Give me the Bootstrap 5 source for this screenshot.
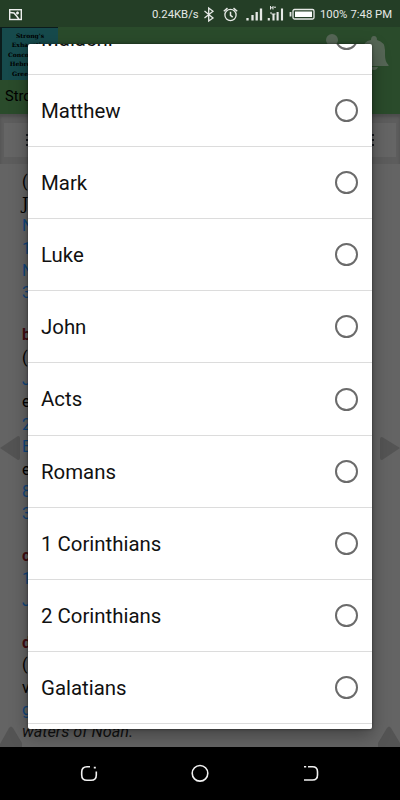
<!DOCTYPE html>
<html lang="en">
<head>
<meta charset="utf-8">
<meta name="viewport" content="width=device-width, initial-scale=1">
<title>Choose a book</title>
<link href="https://cdn.jsdelivr.net/npm/bootstrap@5.3.0/dist/css/bootstrap.min.css" rel="stylesheet">
<style>
body{font-family:Roboto,"Liberation Sans",sans-serif;background:#646464;width:400px;height:800px;overflow:hidden;color:#000}
.phone{width:400px;height:800px}
.status{height:27px;background:#243e26;color:#e6e9e6;font-size:11.3px;line-height:27px;padding-top:1px;white-space:nowrap}
.status svg,.status span{flex:none}
.appbar{height:87px;background:#2a4b2b}
.cover{width:58px;height:53px;background:#164a4c;border:solid #0b1c1c;border-width:1px 0 0 2px;font:bold 6px/9.4px "DejaVu Serif",serif;padding-top:3px;white-space:nowrap}
.apptitle{font-size:14.6px;line-height:32px;padding-left:5px}
.toolrow{height:50px;background:#5d5d5d;padding:9px 4px 7px;box-shadow:inset 0 3px 3px #4d4d4d}
.toolbox{background:#656565;padding:0 21px}
.page-text{height:583px;font-size:16px;line-height:22.36px;padding:6.5px 0 0 22px;overflow:hidden}
.verse{margin:0 0 19.7px}
.verse div{height:22.36px;white-space:nowrap}
.verse .closing{font-size:16.2px;color:#111}
.ref{color:#10467c}
.key{color:#400c10;font-weight:700}
.keys{height:53px;background:#000}
.sheet{left:28px;top:44px;width:344px;height:685px;background:#fff;border-radius:2px;overflow:hidden}
.sheet-shadow{left:28px;top:44px;width:344px;height:685px;border-radius:2px;box-shadow:0 0 3px rgba(0,0,0,.5),0 6px 18px rgba(0,0,0,.35)}
.choices{margin-top:-41.5px}
.choice{height:72.2px;border-bottom:1.5px solid #dcdcdc;padding:0 14px 0 13px;font-size:20.4px;color:#111}
.choice span{padding-top:1.5px}
.ring{width:23px;height:23px;border:2px solid #6b6b6b;border-radius:50%}
</style>
<script src="https://cdn.jsdelivr.net/npm/bootstrap@5.3.0/dist/js/bootstrap.bundle.min.js"></script>
</head>
<body>
<div class="phone position-relative d-flex flex-column overflow-hidden">
  <header class="status d-flex align-items-center">
    <svg width="152" height="27" fill="none" stroke="#eef0ee" stroke-width="1.4"><rect x="9.7" y="8.7" width="11.6" height="9.8"/><path d="M10 11.5l4 .5 3 3.5 2 3M16 12h3M17.5 10.5v3" stroke-width="1.5"/></svg>
    <span style="width:46px">0.24KB/s</span>
    <svg width="122" height="27" viewBox="198 0 122 27" fill="none" stroke="#e6e9e6" stroke-width="1.3">
      <path d="M204.5 10l8.500 7-4.300 3V7l4.300 3.300-8.500 6.700"/>
      <circle cx="230.5" cy="14" r="5.6"/><path d="M230.5 10.800v3.500l2.200 1.800M223.800 10.300l3.700-3.200M237.200 10.300l-3.700-3.200" stroke-width="1.5"/>
      <path d="M247.5 17v2.500M252.500 14v5.500M256.700 11v8.500M261 7.500v12" stroke-width="2.3"/>
      <path d="M268.800 17v2.500M273.500 13v6.500M277.600 11v8.500M282 7.500v12" stroke-width="2.1"/>
      <path d="M270.5 5v3.500M273 5v3.500M270.500 6.800h2.500M274 6.200h2M270 12h2M271.500 13h4" stroke-width="1"/>
      <rect x="293" y="8.500" width="21" height="9.500" rx="1.5"/><rect x="295" y="10.500" width="17" height="5.500" fill="#fff" stroke="none"/><path d="M290.5 11v4.500" stroke-width="1.8"/>
    </svg>
    <span style="width:30.5px">100%</span><span>7:48 PM</span>
  </header>
  <div class="appbar d-flex justify-content-between">
    <div><div class="cover text-center">Strong's<br>Exhaustive<br>Concordance<br>Hebrew and<br>Greek Lex.</div><div class="apptitle">Strong's</div></div>
    <svg width="90" height="50" viewBox="310 27 90 50" fill="#566656"><circle cx="332" cy="40" r="6"/><path d="M322 47q10-8 20 0zM359 66q4-4 4-11v-5q0-9 8-10 0-4 3-4t3 4q8 2 8 10v5q0 7 3.500 10v1zM370 67h8q-1 3-4 3t-4-3z"/></svg>
  </div>
  <div class="toolrow"><div class="toolbox h-100 d-flex justify-content-between align-items-center">
    <svg width="4" height="16" fill="#171a20"><path d="M1 2h2v2H1zM1 7h2v2H1zM1 12h2v2H1z"/></svg>
    <svg width="4" height="16" fill="#171a20"><path d="M1 2h2v2H1zM1 7h2v2H1zM1 12h2v2H1z"/></svg>
  </div></div>
  <main class="page-text">
    <div class="verse"><div>(</div><div style="font-family:'DejaVu Serif',serif">J</div><div class="ref">N</div><div class="ref">1</div><div class="ref">N</div><div class="ref">3</div></div>
    <div class="verse"><div class="key">b</div><div>(</div><div class="ref">J</div><div>e</div><div class="ref">2</div><div class="ref">E</div><div>e</div><div class="ref">8</div><div class="ref">3</div></div>
    <div class="verse"><div class="key">c</div><div class="ref">1</div><div class="ref">J</div></div>
    <div class="verse"><div class="key">d</div><div>(</div><div>v</div><div class="ref">g</div><div class="closing fst-italic">waters of Noah.</div></div>
  </main>
  <svg class="position-absolute top-0 start-0" width="400" height="747" fill="#545454"><path d="M0 448l18-12q2 0 2 2v20q0 2-2 2zM400 448l-18-11q-2 0-2 2v19q0 2 2 2zM0 747v-3l9-16q2-3 4 0l9 15v4zM378 747v-4l9-15q2-3 4 0l9 15v4z"/></svg>
  <div class="sheet-shadow position-absolute"></div>
  <section class="sheet position-absolute" role="dialog" aria-label="Books">
    <div class="choices">
      <div class="choice d-flex align-items-center justify-content-between"><span>Malachi</span><i class="ring"></i></div>
      <div class="choice d-flex align-items-center justify-content-between"><span>Matthew</span><i class="ring"></i></div>
      <div class="choice d-flex align-items-center justify-content-between"><span>Mark</span><i class="ring"></i></div>
      <div class="choice d-flex align-items-center justify-content-between"><span>Luke</span><i class="ring"></i></div>
      <div class="choice d-flex align-items-center justify-content-between"><span>John</span><i class="ring"></i></div>
      <div class="choice d-flex align-items-center justify-content-between"><span>Acts</span><i class="ring"></i></div>
      <div class="choice d-flex align-items-center justify-content-between"><span>Romans</span><i class="ring"></i></div>
      <div class="choice d-flex align-items-center justify-content-between"><span>1 Corinthians</span><i class="ring"></i></div>
      <div class="choice d-flex align-items-center justify-content-between"><span>2 Corinthians</span><i class="ring"></i></div>
      <div class="choice d-flex align-items-center justify-content-between"><span>Galatians</span><i class="ring"></i></div>
    </div>
  </section>
  <nav class="keys position-relative">
    <svg width="400" height="53" viewBox="0 747 400 53" fill="none" stroke="#f2f2f2" stroke-width="1.6">
      <path d="M90 766.800h-3q-5.300 0-5.300 5.300v2.800q0 5.300 5.300 5.300h4q5.300 0 5.300-5.300v-3.500M93.800 767.600h2"/>
      <circle cx="200" cy="773.300" r="7.800"/>
      <path d="M308 766.800h4.500q5 0 5 5v3.200q0 5-5 5H304M304 766.800h2.200"/>
    </svg>
  </nav>
</div>
</body>
</html>
